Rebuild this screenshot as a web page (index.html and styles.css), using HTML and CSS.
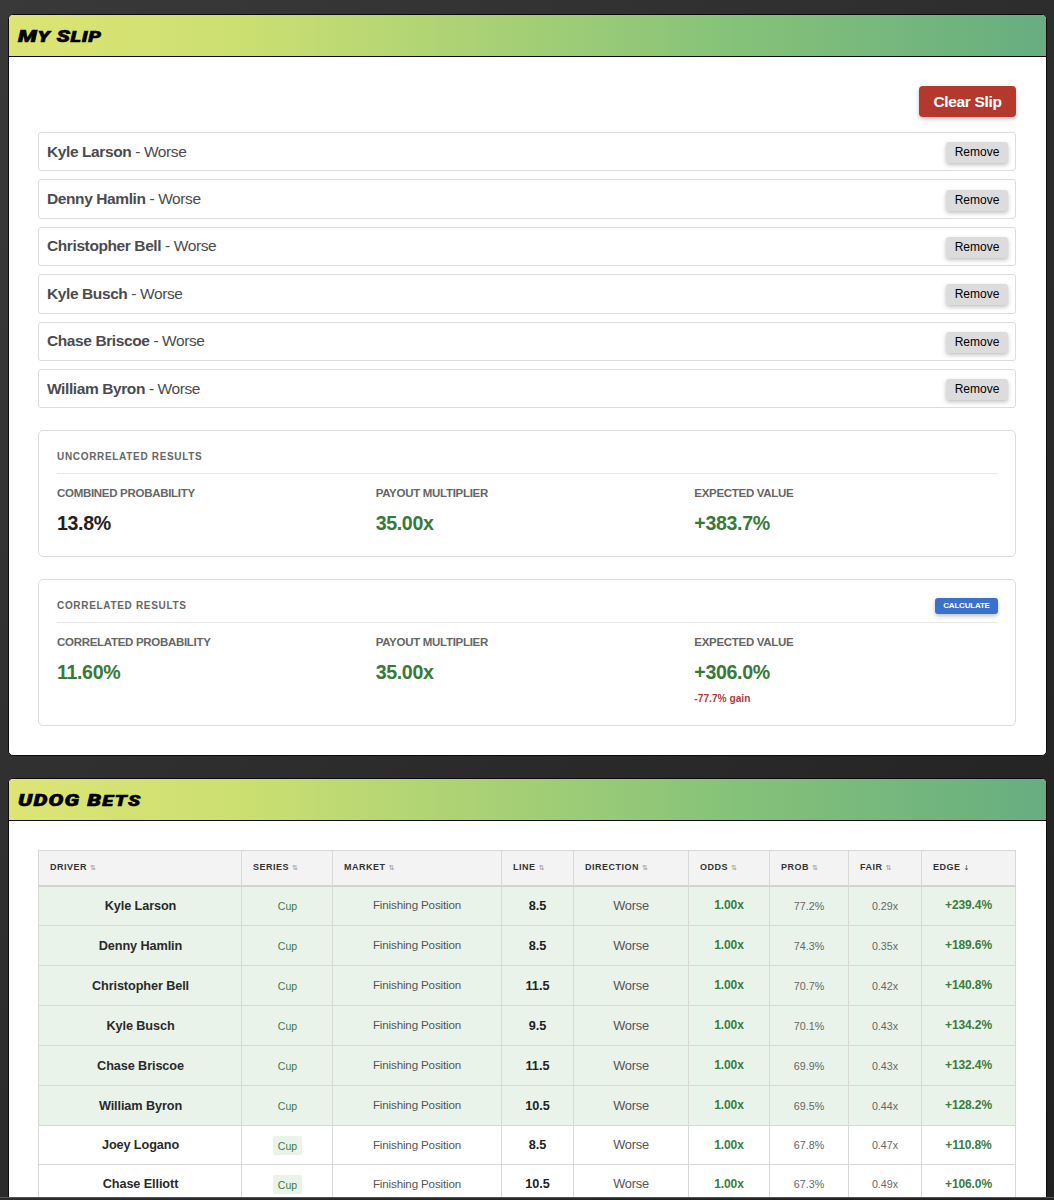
FILE: index.html
```html
<!DOCTYPE html>
<html lang="en">
  <head>
    <meta charset="UTF-8" />
    <meta name="viewport" content="width=device-width, initial-scale=1.0" />
    <title>My Slip</title>
    <link rel="stylesheet" href="styles.css">
  </head>
  <body>
    <div class="page">
      <section class="card">
        <div class="card-header"><h2>M<small>Y</small> S<small>LIP</small></h2></div>
        <div class="card-body">
          <div class="slip-actions"><button class="clear">Clear Slip</button></div>
          <ul class="slip">
            <li><span><b>Kyle Larson</b> - Worse</span><button class="remove">Remove</button></li>
            <li><span><b>Denny Hamlin</b> - Worse</span><button class="remove">Remove</button></li>
            <li><span><b>Christopher Bell</b> - Worse</span><button class="remove">Remove</button></li>
            <li><span><b>Kyle Busch</b> - Worse</span><button class="remove">Remove</button></li>
            <li><span><b>Chase Briscoe</b> - Worse</span><button class="remove">Remove</button></li>
            <li><span><b>William Byron</b> - Worse</span><button class="remove">Remove</button></li>
          </ul>
          <div class="results">
            <div class="results-title"><h3>Uncorrelated Results</h3></div>
            <div class="stats">
              <div>
                <div class="label">Combined Probability</div>
                <div class="value dark">13.8%</div>
              </div>
              <div>
                <div class="label">Payout Multiplier</div>
                <div class="value">35.00x</div>
              </div>
              <div>
                <div class="label">Expected Value</div>
                <div class="value">+383.7%</div>
              </div>
            </div>
          </div>
          <div class="results correlated">
            <div class="results-title">
              <h3>Correlated Results</h3>
              <button class="calculate">Calculate</button>
            </div>
            <div class="stats">
              <div>
                <div class="label">Correlated Probability</div>
                <div class="value">11.60%</div>
              </div>
              <div>
                <div class="label">Payout Multiplier</div>
                <div class="value">35.00x</div>
              </div>
              <div>
                <div class="label">Expected Value</div>
                <div class="value">+306.0%</div>
                <div class="gain">-77.7% gain</div>
              </div>
            </div>
          </div>
        </div>
      </section>

      <section class="card bets">
        <div class="card-header"><h2 class="wide">UDOG B<small>ETS</small></h2></div>
        <div class="card-body">
          <table>
            <colgroup>
              <col class="c-driver" /><col class="c-series" /><col class="c-market" />
              <col class="c-line" /><col class="c-direction" /><col class="c-odds" />
              <col class="c-prob" /><col class="c-fair" /><col class="c-edge" />
            </colgroup>
            <thead>
              <tr>
                <th>Driver <i>⇅</i></th>
                <th>Series <i>⇅</i></th>
                <th>Market <i>⇅</i></th>
                <th>Line <i>⇅</i></th>
                <th>Direction <i>⇅</i></th>
                <th>Odds <i>⇅</i></th>
                <th>Prob <i>⇅</i></th>
                <th>Fair <i>⇅</i></th>
                <th>Edge <i class="sorted">↓</i></th>
              </tr>
            </thead>
            <tbody id="bets"></tbody>
          </table>
        </div>
      </section>
    </div>
    <script>
      const bets = [
        ["Kyle Larson", "8.5", "77.2%", "0.29x", "+239.4%", true],
        ["Denny Hamlin", "8.5", "74.3%", "0.35x", "+189.6%", true],
        ["Christopher Bell", "11.5", "70.7%", "0.42x", "+140.8%", true],
        ["Kyle Busch", "9.5", "70.1%", "0.43x", "+134.2%", true],
        ["Chase Briscoe", "11.5", "69.9%", "0.43x", "+132.4%", true],
        ["William Byron", "10.5", "69.5%", "0.44x", "+128.2%", true],
        ["Joey Logano", "8.5", "67.8%", "0.47x", "+110.8%", false],
        ["Chase Elliott", "10.5", "67.3%", "0.49x", "+106.0%", false],
      ];
      document.getElementById("bets").innerHTML = bets
        .map(
          ([driver, line, prob, fair, edge, selected]) => `
            <tr class="${selected ? "selected" : ""}">
              <td class="driver">${driver}</td>
              <td class="series"><span>Cup</span></td>
              <td class="market">Finishing Position</td>
              <td class="line">${line}</td>
              <td class="direction">Worse</td>
              <td class="odds">1.00x</td>
              <td class="small">${prob}</td>
              <td class="small">${fair}</td>
              <td class="edge">${edge}</td>
            </tr>`
        )
        .join("");
    </script>
  </body>
</html>
```
FILE: styles.css
```css
* {
  margin: 0;
  padding: 0;
  box-sizing: border-box;
}
html {
  background: #242424;
}
body {
  height: 1200px;
  overflow: hidden;
  font-family: "Liberation Sans", Arial, sans-serif;
  background: linear-gradient(135deg, #393939 0%, #2c2c2c 50%, #202020 100%);
}
.page {
  height: 1198px;
  overflow: hidden;
  padding: 14px 7px 0 8px;
  border-bottom: 1px solid #555;
}
.card {
  border: 1px solid #0b0b0b;
  border-radius: 5px;
  overflow: hidden;
  background: #fff;
  height: 742px;
}
.card.bets {
  margin-top: 22px;
  height: 600px;
}
.card-header {
  height: 42px;
  padding-left: 9px;
  display: flex;
  align-items: center;
  border-bottom: 1px solid #0b0b0b;
  background: linear-gradient(90deg, #dde574 0%, #cbdf71 23%, #85c279 70%, #67ad80 100%);
}
h2 {
  padding-top: 1px;
  font-family: Roboto, "Liberation Sans", sans-serif;
  font-size: 17px;
  font-weight: 900;
  font-style: italic;
  letter-spacing: 0.5px;
  line-height: 20px;
  color: #000;
  -webkit-text-stroke: 0.6px #000;
  transform: scaleX(1.3);
  transform-origin: left;
}
h2.wide {
  letter-spacing: 0.95px;
}
h2 small {
  font-size: 15.5px;
}
.card-body {
  padding: 29px 30px 29px 29px;
}
button {
  border: none;
  font-family: inherit;
  cursor: pointer;
  box-shadow: 0 2px 4px rgba(0, 0, 0, 0.25);
}
.slip-actions {
  display: flex;
  justify-content: flex-end;
  margin-bottom: 15px;
}
.clear {
  width: 97px;
  height: 31px;
  border-radius: 4px;
  background: #b4382e;
  color: #fff;
  font-size: 15.5px;
  font-weight: bold;
  letter-spacing: -0.33px;
}
.slip {
  list-style: none;
  display: flex;
  flex-direction: column;
  gap: 8px;
}
.slip li {
  height: 39.4px;
  display: flex;
  justify-content: space-between;
  align-items: center;
  padding: 0 7px 0 8px;
  border: 1px solid #ddd;
  border-radius: 3px;
  color: #4b4b4f;
  font-size: 15.5px;
  line-height: 18px;
  letter-spacing: -0.4px;
}
.remove {
  width: 62px;
  height: 21px;
  margin-top: 2px;
  border-radius: 3px;
  background: #dcdcdc;
  color: #000;
  font-size: 12px;
  line-height: 14px;
  padding-bottom: 1px;
}
.results {
  margin-top: 22px;
  height: 127px;
  padding: 0 17px 0 18px;
  border: 1px solid #ddd;
  border-radius: 5px;
}
.results.correlated {
  height: 147px;
}
.results-title {
  height: 43px;
  padding-top: 8px;
  display: flex;
  justify-content: space-between;
  align-items: center;
  border-bottom: 1px solid #e8e8e8;
}
h3 {
  font-size: 10px;
  letter-spacing: 0.68px;
  text-transform: uppercase;
  color: #666;
}
.calculate {
  width: 63px;
  height: 16px;
  margin-top: 1px;
  border-radius: 3px;
  background: #3a71cb;
  color: #fff;
  font-size: 8px;
  font-weight: bold;
  letter-spacing: -0.2px;
  text-transform: uppercase;
}
.stats {
  display: grid;
  grid-template-columns: repeat(3, 1fr);
  gap: 15px;
  padding-top: 12px;
}
.label {
  font-size: 11.5px;
  line-height: 14px;
  font-weight: bold;
  letter-spacing: -0.3px;
  text-transform: uppercase;
  color: #666;
}
.value {
  margin-top: 12px;
  font-size: 19.6px;
  line-height: 23px;
  font-weight: bold;
  letter-spacing: -0.35px;
  color: #387938;
}
.value.dark {
  color: #222;
}
.gain {
  margin-top: 9px;
  font-size: 10.2px;
  line-height: 12px;
  font-weight: bold;
  color: #b03a3a;
}
table {
  width: 978px;
  table-layout: fixed;
  border-collapse: collapse;
  text-align: center;
}
.c-driver { width: 203px; }
.c-series { width: 91px; }
.c-market { width: 169px; }
.c-line { width: 72px; }
.c-direction { width: 115px; }
.c-odds { width: 81px; }
.c-prob { width: 79px; }
.c-fair { width: 73px; }
.c-edge { width: 94px; }
th,
td {
  border: 1px solid #d6d9d6;
}
th {
  height: 35px;
  padding: 0 11px 1px;
  text-align: left;
  background: #f3f3f3;
  border-bottom: 2px solid #d3d3d3;
  font-size: 9px;
  letter-spacing: 0.5px;
  text-transform: uppercase;
  color: #333;
}
th i {
  font-family: "DejaVu Sans", sans-serif;
  font-size: 7px;
  font-style: normal;
  font-weight: normal;
  color: #999;
}
th i.sorted {
  color: #333;
}
td {
  height: 39px;
  color: #555;
  line-height: 16px;
}
.selected td {
  height: 40px;
  background: #e9f3ea;
}
td.driver {
  padding-left: 1px;
  font-size: 12.7px;
  font-weight: bold;
  letter-spacing: -0.1px;
  color: #2a2a2a;
}
td.series {
  padding-left: 1px;
  font-size: 10.5px;
  color: #3a7d3f;
}
.series span {
  display: inline-block;
  padding: 2px 5px 1px;
  border-radius: 2px;
  background: #e9f3ea;
}
td.market {
  padding-bottom: 1px;
  font-size: 11.6px;
  letter-spacing: -0.15px;
}
td.line {
  font-size: 12.7px;
  font-weight: bold;
  color: #222;
}
td.direction {
  font-size: 12.8px;
  letter-spacing: -0.2px;
}
td.odds,
td.edge {
  padding-bottom: 1px;
  font-size: 12px;
  font-weight: bold;
  letter-spacing: -0.1px;
  color: #3a7d3f;
}
td.small {
  font-size: 10.7px;
  color: #666;
}
```
